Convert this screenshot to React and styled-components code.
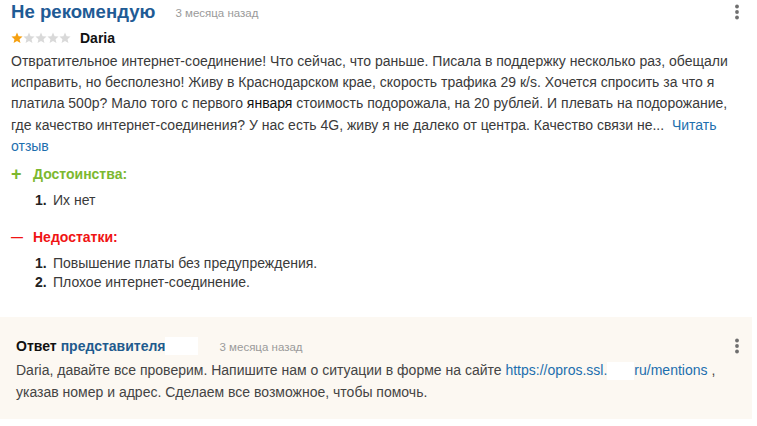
import styled, { createGlobalStyle } from "styled-components";

const GlobalStyle = createGlobalStyle`
  body {
    margin: 0;
    background: #fff;
    font-family: "Liberation Sans", Arial, sans-serif;
    color: #333;
  }
`;

function Kebab() {
  return (
    <svg width="6" height="16" viewBox="0 0 6 16">
      <circle cx="3" cy="2.5" r="1.9" fill="#6f6f6f" />
      <circle cx="3" cy="8" r="1.9" fill="#6f6f6f" />
      <circle cx="3" cy="13.5" r="1.9" fill="#6f6f6f" />
    </svg>
  );
}

function Star({ on }) {
  return (
    <svg width="12" height="12" viewBox="0 0 24 24">
      <path
        d="M12 1l3.2 7.3 7.9.7-6 5.3 1.8 7.8L12 18l-6.9 4.1 1.8-7.8-6-5.3 7.9-.7z"
        fill={on ? "#f5a011" : "#d9d9d9"}
      />
    </svg>
  );
}

function App() {
  return (
    <>
      <GlobalStyle />
      <Review>
        <TopRow>
          <Title>Не рекомендую</Title>
          <Ago>3 месяца назад</Ago>
          <Menu>
            <Kebab />
          </Menu>
        </TopRow>
        <RatingRow>
          <Stars>
            {[1, 2, 3, 4, 5].map((n) => (
              <Star key={n} on={n <= 1} />
            ))}
          </Stars>
          <Author>Daria</Author>
        </RatingRow>
        <Body>
          Отвратительное интернет-соединение! Что сейчас, что раньше. Писала в
          поддержку несколько раз, обещали исправить, но бесполезно! Живу в
          Краснодарском крае, скорость трафика 29 к/s. Хочется спросить за что я
          платила 500р? Мало того с первого <Dark>января</Dark> стоимость
          подорожала, на 20 рублей. И плевать на подорожание, где качество
          интернет-соединения? У нас есть 4G, живу я не далеко от центра.
          Качество связи не...&nbsp; <Link>Читать отзыв</Link>
        </Body>

        <Heading $tone="#7cb82f">
          <Mark $size="18px">+</Mark>Достоинства:
        </Heading>
        <List>
          <Item>
            <Num>1.</Num>Их нет
          </Item>
        </List>

        <Heading $tone="#f01414" $gap="17px">
          <Mark $size="12px">—</Mark>Недостатки:
        </Heading>
        <List>
          <Item>
            <Num>1.</Num>Повышение платы без предупреждения.
          </Item>
          <Item>
            <Num>2.</Num>Плохое интернет-соединение.
          </Item>
        </List>
      </Review>

      <Reply>
        <ReplyHead>
          <Strong>Ответ</Strong>
          <Rep>представителя</Rep>
          <Hidden $w="33px" />
          <Ago $left="21px">3 месяца назад</Ago>
          <Menu>
            <Kebab />
          </Menu>
        </ReplyHead>
        <ReplyText>
          Daria, давайте все проверим. Напишите нам о ситуации в форме на сайте{" "}
          <Link>https://opros.ssl.</Link>
          <Hidden $w="27px" />
          <Link>ru/mentions</Link> , указав номер и адрес. Сделаем все
          возможное, чтобы помочь.
        </ReplyText>
      </Reply>
    </>
  );
}

const Review = styled.section`
  padding: 0 17px 0 11px;
`;

const TopRow = styled.div`
  display: flex;
  align-items: center;
  height: 24px;
`;

const Title = styled.h2`
  margin: 0;
  font-size: 18.6px;
  line-height: 24px;
  font-weight: bold;
  color: #1f5b95;
`;

const Ago = styled.span`
  margin-left: ${(p) => p.$left || "20px"};
  font-size: 11.5px;
  font-weight: normal;
  color: #9a9a9a;
  padding-top: 2px;
`;

const Menu = styled.div`
  margin-left: auto;
  display: flex;
  align-items: center;
`;

const RatingRow = styled.div`
  display: flex;
  align-items: center;
  height: 20px;
  margin-top: 4px;
`;

const Stars = styled.div`
  display: flex;
  gap: 0;
`;

const Author = styled.span`
  margin-left: 9px;
  font-size: 14px;
  font-weight: bold;
  color: #111;
`;

const Body = styled.p`
  margin: 3px 0 0;
  font-size: 14px;
  line-height: 21.2px;
  color: #3a3a3a;
`;

const Dark = styled.span`
  color: #111;
`;

const Link = styled.span`
  color: #1d6fae;
`;

const Heading = styled.div`
  display: flex;
  align-items: center;
  margin-top: ${(p) => p.$gap || "7px"};
  font-size: 14px;
  line-height: 20px;
  font-weight: bold;
  color: ${(p) => p.$tone};
`;

const Mark = styled.span`
  flex: 0 0 22px;
  font-size: ${(p) => p.$size};
`;

const List = styled.ol`
  list-style: none;
  margin: 7px 0 0;
  padding: 0 0 0 24px;
`;

const Item = styled.li`
  display: flex;
  font-size: 14px;
  line-height: 19px;
  color: #3a3a3a;
`;

const Num = styled.span`
  width: 18px;
  font-weight: bold;
  color: #222;
`;

const Reply = styled.section`
  margin: 25px 5px 0 0;
  padding: 19px 12px 16px 16px;
  background: #fcf8f2;
`;

const ReplyHead = styled.div`
  display: flex;
  align-items: center;
  height: 20px;
  font-size: 14px;
  font-weight: bold;
`;

const Strong = styled.span`
  color: #111;
`;

const Rep = styled.span`
  margin-left: 4px;
  color: #1f5b8e;
`;

const Hidden = styled.span`
  display: inline-block;
  width: ${(p) => p.$w};
  height: 18px;
  vertical-align: middle;
  background: #fff;
`;

const ReplyText = styled.p`
  margin: 3px 0 0;
  font-size: 14px;
  line-height: 22px;
  color: #444;
`;

export default App;
